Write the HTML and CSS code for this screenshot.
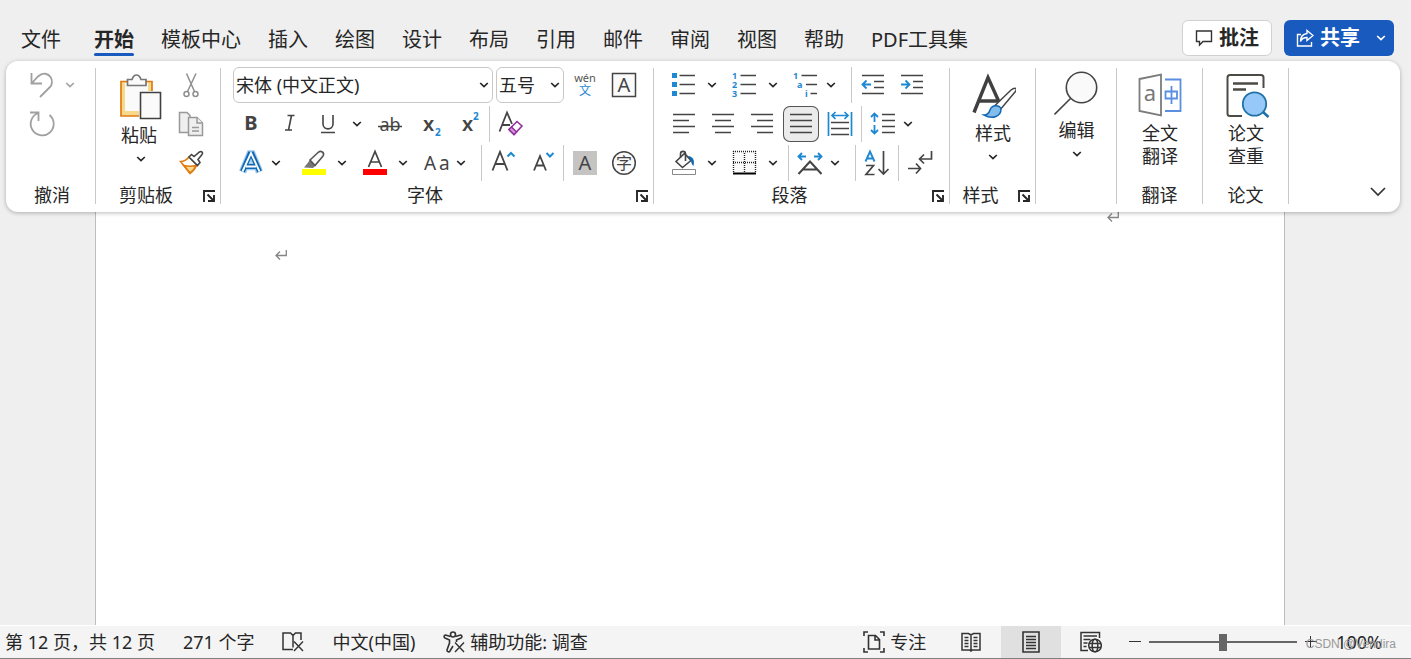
FILE: index.html
```html
<!DOCTYPE html>
<html lang="zh-CN">
<head>
<meta charset="utf-8">
<title>文档</title>
<link rel="stylesheet" href="styles.css">
</head>
<body>
<svg class="defs" aria-hidden="true">
  <symbol id="chev" viewBox="0 0 10 6"><path d="M1.2 1 5 4.6 8.8 1" fill="none" stroke="currentColor" stroke-width="1.7"/></symbol>
  <symbol id="launch" viewBox="0 0 12 12"><path d="M1 12V1h11M4.5 4.500l6 6M11 5v6H5" fill="none" stroke="#262626" stroke-width="1.900"/></symbol>
  <symbol id="ret" viewBox="0 0 12 12"><path d="M11.3 1v5.500H1M5 2.500l-4 4 4 4" fill="none" stroke="#858585" stroke-width="1.300"/></symbol>
</svg>

<header class="top">
  <nav class="tabs">
    <a class="tab file" href="#">文件</a>
    <a class="tab active" href="#">开始</a>
    <a class="tab" href="#">模板中心</a>
    <a class="tab" href="#">插入</a>
    <a class="tab" href="#">绘图</a>
    <a class="tab" href="#">设计</a>
    <a class="tab" href="#">布局</a>
    <a class="tab" href="#">引用</a>
    <a class="tab" href="#">邮件</a>
    <a class="tab" href="#">审阅</a>
    <a class="tab" href="#">视图</a>
    <a class="tab" href="#">帮助</a>
    <a class="tab" href="#">PDF工具集</a>
  </nav>
  <div class="actions">
    <button class="comment"><svg width="18" height="18" viewBox="0 0 18 18"><path d="M1.500 2h15v10.500H8L4.500 16v-3.500h-3z" fill="none" stroke="#333" stroke-width="1.400"/></svg>批注</button>
    <button class="share"><svg width="18" height="18" viewBox="0 0 18 18" fill="none" stroke="#fff" stroke-width="1.400"><path d="M5 5.500H1.500v11.500h14V13M11 1.500l6 5-6 5V8.500c-3.500 0-5.500 1.500-6.500 4 0-5 2.500-7.500 6.500-8z"/></svg>共享<svg class="chev" width="10" height="6"><use href="#chev"/></svg></button>
  </div>
</header>

<main class="ribbon">
  <section class="group undo">
    <div class="rows">
      <div class="row">
        <button class="ic" aria-label="撤消"><svg viewBox="0 0 36 36"><path d="M8.500 6v10.500H19M8.500 16.500 15 9.500C20 5 25 6.500 27.500 10S29 18 27 20L17 30" fill="none" stroke="#a0a0a0" stroke-width="1.800"/></svg></button><button class="arr dim" aria-label="撤消列表"><svg><use href="#chev"/></svg></button>
      </div>
      <div class="row">
        <button class="ic" aria-label="重做"><svg viewBox="0 0 36 36"><path d="M7 6.500h8.500V15M15.500 7A11.500 11.500 0 1 0 26.500 9" fill="none" stroke="#a0a0a0" stroke-width="1.800"/></svg></button>
      </div>
    </div>
    <div class="foot"><span>撤消</span></div>
  </section>

  <section class="group">
    <div class="cols">
      <button class="big paste"><svg width="44" height="48" viewBox="0 0 44 48"><path d="M2 8.500h31V43H2z" fill="#f8d98c" stroke="#e07b12" stroke-width="1.700"/><path d="M6 10h23v28H6z" fill="#fafafa"/><path d="M8.500 12.500V6.500H13c1-3 2.500-4.500 4.500-4.500S21 3.500 22 6.500h5v6z" fill="#fafafa" stroke="#767676" stroke-width="1.700"/><path d="M20 18h22v29H20z" fill="#fff"/><path d="M21.500 19.500h20v26h-20z" fill="#fafafa" stroke="#404040" stroke-width="1.600"/></svg><span>粘贴</span><svg class="chev"><use href="#chev"/></svg></button>
      <div class="rows">
        <button class="ic" aria-label="剪切"><svg viewBox="0 0 36 36" fill="none" stroke="#8f8f8f" stroke-width="1.500"><path d="M13.500 6.500 21.500 24.500M23 6.500 14.500 24.500"/><circle cx="13.500" cy="27" r="2.500"/><circle cx="22.500" cy="27" r="2.500"/></svg></button>
        <button class="ic" aria-label="复制"><svg viewBox="0 0 36 36" fill="#efefef" stroke="#999" stroke-width="1.500"><path d="M14 26.500H6.500v-20H14l3 3v17z"/><path d="M15.500 11.500h8.500l5.500 5.500v12.500h-14z"/><path d="M24 11.500V17h5.500M19 21.500h7M19 25h7"/></svg></button>
        <button class="ic" aria-label="格式刷"><svg viewBox="0 0 36 36" stroke-width="1.600"><path d="M7.500 16.500c3 0 6-1.500 8.500-4.500l8 8c-2 4-4 6.500-7 8.500z" fill="#fff" stroke="#e07b12"/><path d="M11 20.500c4 1 8 1 12 0-1 3-3.500 6-6 7.500z" fill="#f8d98c" stroke="#e07b12"/><path d="M16 12l2.500-2.500 2.500 2L26.500 7c2-1.500 4 1 2.500 2.500l-4 5 2 3-2.500 3z" fill="#fff" stroke="#444"/></svg></button>
      </div>
    </div>
    <div class="foot"><span>剪贴板</span><button class="launch" aria-label="剪贴板设置"><svg><use href="#launch"/></svg></button></div>
  </section>

  <section class="group">
    <div class="rows">
      <div class="row">
        <div class="combo font"><select aria-label="字体"><option>宋体 (中文正文)</option></select><svg class="chev"><use href="#chev"/></svg></div>
        <div class="combo size"><select aria-label="字号"><option>五号</option></select><svg class="chev"><use href="#chev"/></svg></div>
        <button class="ic" aria-label="拼音指南"><svg viewBox="0 0 36 36"><text x="18" y="15" font-size="11" text-anchor="middle" fill="#555">wén</text><text x="18" y="28" font-size="12" text-anchor="middle" fill="#1e88d2">文</text></svg></button>
        <button class="ic" aria-label="字符边框"><svg viewBox="0 0 36 36"><path d="M6.500 6.500h23v23h-23z" fill="#fafafa" stroke="#444" stroke-width="1.500"/><text x="18" y="25" font-size="20" text-anchor="middle">A</text></svg></button>
      </div>
      <div class="row">
        <button class="ic" aria-label="加粗"><svg viewBox="0 0 36 36"><text x="18" y="24" font-size="20" font-weight="700" text-anchor="middle">B</text></svg></button>
        <button class="ic" aria-label="倾斜"><svg viewBox="0 0 36 36"><path d="M15.500 9.500h7M19.500 9.500 16.500 24M13 24h7" fill="none" stroke="#444" stroke-width="1.600"/></svg></button>
        <span class="split"><button class="ic" aria-label="下划线"><svg viewBox="0 0 36 36"><path d="M12 9v9c0 6.500 10 6.500 10 0V9M10 26.500h14" fill="none" stroke="#444" stroke-width="1.600"/></svg></button><button class="arr" aria-label="下划线样式"><svg><use href="#chev"/></svg></button></span>
        <button class="ic" aria-label="删除线"><svg viewBox="0 0 36 36"><text x="18" y="25" font-size="18" text-anchor="middle">ab</text><path d="M6 20.500h24" stroke="#444" stroke-width="1.500"/></svg></button>
        <button class="ic" aria-label="下标"><svg viewBox="0 0 36 36"><text x="12" y="25" font-size="20" font-weight="600">x</text><text x="24" y="30" font-size="10" font-weight="700" fill="#1e88d2">2</text></svg></button>
        <button class="ic" aria-label="上标"><svg viewBox="0 0 36 36"><text x="12" y="25" font-size="20" font-weight="600">x</text><text x="23" y="14" font-size="10" font-weight="700" fill="#1e88d2">2</text></svg></button>
        <i class="sep"></i>
        <button class="ic" aria-label="清除格式"><svg viewBox="0 0 36 36"><path d="M6.500 25.500 14 6.500 19 18M9 19h8" fill="none" stroke="#444" stroke-width="1.800"/><path d="M16 23.500 24 15.500l5 4.500-8 8.500z" fill="#fff" stroke="#93309c" stroke-width="1.600"/><path d="M16 23.500 18.500 21l5 5-2.500 2.500z" fill="#d59adb" stroke="#93309c" stroke-width="1.500"/></svg></button>
      </div>
      <div class="row">
        <span class="split wide"><button class="ic" aria-label="文本效果"><svg viewBox="0 0 36 36"><g fill="none"><path d="M9.500 27 17 9h2l7.500 18M13 21.500h10" stroke="#9ccbf0" stroke-width="7.500"/><path d="M9.500 26.500 17 9h2l7.500 17.500M13 21.500h10" stroke="#1268b3" stroke-width="5"/><path d="M9.500 26.500 18 8 26.500 26.500M13 21.500h10" stroke="#fff" stroke-width="1.800"/></g></svg></button><button class="arr" aria-label="文本效果列表"><svg><use href="#chev"/></svg></button></span>
        <span class="split"><button class="ic" aria-label="突出显示"><svg viewBox="0 0 36 36"><path d="M6 24v6h24v-6z" fill="#ff0"/><path d="M8 22.500 14 15l5 6-2 2z" fill="#777"/><path d="M14 15 22 7.500c3-2.500 7 0 5 3.500L19 20.500z" fill="#fafafa" stroke="#555" stroke-width="1.600"/></svg></button><button class="arr" aria-label="突出显示颜色"><svg><use href="#chev"/></svg></button></span>
        <span class="split"><button class="ic" aria-label="字体颜色"><svg viewBox="0 0 36 36"><path d="M6 24v6h24v-6z" fill="red"/><path d="M11.500 22 18 6.500 24.500 22M13.500 17h9" fill="none" stroke="#444" stroke-width="1.700"/></svg></button><button class="arr" aria-label="字体颜色列表"><svg><use href="#chev"/></svg></button></span>
        <span class="split wide"><button class="ic" aria-label="更改大小写"><svg viewBox="0 0 36 36"><text x="6" y="25" font-size="19">A</text><text x="21" y="25" font-size="19">a</text></svg></button><button class="arr" aria-label="大小写列表"><svg><use href="#chev"/></svg></button></span>
        <i class="sep"></i>
        <button class="ic" aria-label="增大字号"><svg viewBox="0 0 36 36"><path d="M7.500 25.500 15 7l7.500 18.500M10 19h10" fill="none" stroke="#444" stroke-width="1.800"/><path d="M22.500 11.500 26 8l3.500 3.500" fill="none" stroke="#1e88d2" stroke-width="2"/></svg></button>
        <button class="ic" aria-label="减小字号"><svg viewBox="0 0 36 36"><path d="M10 25.500 16 11l6 14.500M12 20.500h8" fill="none" stroke="#444" stroke-width="1.800"/><path d="M22.500 8 26 11.500 29.500 8" fill="none" stroke="#1e88d2" stroke-width="2"/></svg></button>
        <i class="sep"></i>
        <button class="ic" aria-label="字符底纹"><svg viewBox="0 0 36 36"><path d="M6 6h24v24H6z" fill="#c6c4c2"/><text x="18" y="25" font-size="20" text-anchor="middle">A</text></svg></button>
        <button class="ic" aria-label="带圈字符"><svg viewBox="0 0 36 36"><circle cx="18" cy="18" r="11.300" fill="#fafafa" stroke="#444" stroke-width="1.500"/><text x="18" y="24" font-size="16" text-anchor="middle">字</text></svg></button>
      </div>
    </div>
    <div class="foot"><span>字体</span><button class="launch" aria-label="字体设置"><svg><use href="#launch"/></svg></button></div>
  </section>

  <section class="group">
    <div class="rows">
      <div class="row">
        <span class="split"><button class="ic" aria-label="项目符号"><svg viewBox="0 0 36 36"><path d="M6 6h5v5H6zM6 15h5v5H6zM6 24h5v5H6z" fill="#1e88d2"/><path d="M13.500 8.500H29M13.500 17.500H29M13.500 26.500H29" stroke="#444" stroke-width="1.600"/></svg></button><button class="arr" aria-label="项目符号库"><svg><use href="#chev"/></svg></button></span>
        <span class="split"><button class="ic" aria-label="编号"><svg viewBox="0 0 36 36"><g font-size="9" font-weight="700" fill="#1e88d2"><text x="5" y="12">1</text><text x="5" y="21">2</text><text x="5" y="30">3</text></g><path d="M13.500 8.500H29M13.500 17.500H29M13.500 26.500H29" stroke="#444" stroke-width="1.600"/></svg></button><button class="arr" aria-label="编号库"><svg><use href="#chev"/></svg></button></span>
        <span class="split wide"><button class="ic" aria-label="多级列表"><svg viewBox="0 0 36 36"><g font-size="9" font-weight="700" fill="#1e88d2"><text x="5" y="12">1</text><text x="9" y="21">a</text><text x="17" y="30">i</text></g><path d="M13.500 8.500H29M18 17.500h11M22.500 26.500H29" stroke="#444" stroke-width="1.600"/></svg></button><button class="arr" aria-label="列表库"><svg><use href="#chev"/></svg></button></span>
        <i class="sep"></i>
        <button class="ic" aria-label="减少缩进"><svg viewBox="0 0 36 36" fill="none" stroke="#444" stroke-width="1.600"><path d="M7 8.500h22M19 14.500h10M19 20.500h10M7 26.500h22"/><path d="M16 17.500H7.500M11.500 13.500l-4 4 4 4" stroke="#1e88d2" stroke-width="1.800"/></svg></button>
        <button class="ic" aria-label="增加缩进"><svg viewBox="0 0 36 36" fill="none" stroke="#444" stroke-width="1.600"><path d="M7 8.500h22M19 14.500h10M19 20.500h10M7 26.500h22"/><path d="M7 17.500h8.500M11.500 13.500l4 4-4 4" stroke="#1e88d2" stroke-width="1.800"/></svg></button>
      </div>
      <div class="row">
        <button class="ic" aria-label="左对齐"><svg viewBox="0 0 36 36"><path d="M7 8.500h22M7 14.500h16M7 20.500h22M7 26.500h16" stroke="#444" stroke-width="1.600"/></svg></button>
        <button class="ic" aria-label="居中"><svg viewBox="0 0 36 36"><path d="M7 8.500h22M10 14.500h16M7 20.500h22M10 26.500h16" stroke="#444" stroke-width="1.600"/></svg></button>
        <button class="ic" aria-label="右对齐"><svg viewBox="0 0 36 36"><path d="M7 8.500h22M13 14.500h16M7 20.500h22M13 26.500h16" stroke="#444" stroke-width="1.600"/></svg></button>
        <button class="ic on" aria-label="两端对齐"><svg viewBox="0 0 36 36"><path d="M7 8.500h22M7 14.500h22M7 20.500h22M7 26.500h22" stroke="#444" stroke-width="1.600"/></svg></button>
        <button class="ic" aria-label="分散对齐"><svg viewBox="0 0 36 36" fill="none"><path d="M9 16.500h18M9 22.500h18M9 28.500h18" stroke="#444" stroke-width="1.600"/><path d="M6.500 6v24M29.500 6v24M10 9.500h16M13.500 6l-3.500 3.500 3.500 3.500M22.500 6l3.500 3.500-3.500 3.500" stroke="#1e88d2" stroke-width="1.700"/></svg></button>
        <i class="sep"></i>
        <span class="split wide"><button class="ic" aria-label="行距"><svg viewBox="0 0 36 36" fill="none"><path d="M17 8.500h13M17 14.500h13M17 20.500h13M17 26.500h13" stroke="#444" stroke-width="1.600"/><path d="M9.500 8v8M6 11l3.500-3.500L13 11M9.500 19v8M6 24l3.500 3.500L13 24" stroke="#1e88d2" stroke-width="1.800"/></svg></button><button class="arr" aria-label="行距列表"><svg><use href="#chev"/></svg></button></span>
      </div>
      <div class="row">
        <span class="split"><button class="ic" aria-label="底纹"><svg viewBox="0 0 36 36"><path d="M6.500 24.500h23v5h-23z" fill="#fff" stroke="#888"/><path d="M10 16.500 18.500 8.500l6.500 7-8.500 7z" fill="#fafafa" stroke="#444" stroke-width="1.600"/><path d="M14.500 12.500V9c0-3.500 5-3.500 5 0v7" fill="none" stroke="#444" stroke-width="1.600"/><path d="M22 11c5 .5 7 4 5.500 10-1-1-2-2-2.500-5z" fill="#1268b3"/></svg></button><button class="arr" aria-label="底纹颜色"><svg><use href="#chev"/></svg></button></span>
        <span class="split"><button class="ic" aria-label="边框"><svg viewBox="0 0 36 36" fill="none" stroke="#222"><path d="M6.500 6.500h22v20h-22z" fill="#fafafa" stroke="none"/><path d="M6 6.500h23M6.500 6v21M28.500 6v21M17.500 8v19M6 17.500h23" stroke-width="1.400" stroke-dasharray="1 1"/><path d="M6 28.500h23" stroke="#000" stroke-width="2"/></svg></button><button class="arr" aria-label="边框列表"><svg><use href="#chev"/></svg></button></span>
        <i class="sep"></i>
        <span class="split wide"><button class="ic" aria-label="中文版式"><svg viewBox="0 0 36 36" fill="none"><path d="M6.500 29 18 16.500 29.500 29M11 24.500h14" stroke="#444" stroke-width="2"/><path d="M14 11.500H7M10 8l-3.500 3.500L10 15M22 11.500h7M26 8l3.500 3.500L26 15" stroke="#1e88d2" stroke-width="1.900"/></svg></button><button class="arr" aria-label="版式列表"><svg><use href="#chev"/></svg></button></span>
        <i class="sep"></i>
        <button class="ic" aria-label="排序"><svg viewBox="0 0 36 36" fill="none"><path d="M6.500 16.500 11 6.500l4.500 10M8 13.500h6" stroke="#1e88d2" stroke-width="1.900"/><path d="M7 20.500h7.500L7 29.500h8.500M24.500 6v23M19.500 24l5 5 5-5" stroke="#444" stroke-width="1.700"/></svg></button>
        <i class="sep"></i>
        <button class="ic" aria-label="显示编辑标记"><svg viewBox="0 0 36 36" fill="none" stroke="#444" stroke-width="1.700"><path d="M29.500 6v8H18M22 9.500l-4.500 4.500 4.500 4.500M6 23.500h12M14 18.500l4.500 5-4.500 5"/></svg></button>
      </div>
    </div>
    <div class="foot"><span>段落</span><button class="launch" aria-label="段落设置"><svg><use href="#launch"/></svg></button></div>
  </section>

  <section class="group">
    <div class="cols">
      <button class="big"><svg width="46" height="46" viewBox="0 0 46 46"><path d="M4 39.500 18 4.500 29.500 30M9 28h19" fill="none" stroke="#404040" stroke-width="3.400"/><path d="M25 32.500 41 17c4-3 7-2 4 2L30 37z" fill="#fff" stroke="#444" stroke-width="1.500"/><path d="M14 42c4 0 5-2 6-5 2-6 10-5 11-1 0 7-8 11-17 6z" fill="#83bdec" stroke="#1268b3" stroke-width="1.500"/></svg><span>样式</span><svg class="chev"><use href="#chev"/></svg></button>
    </div>
    <div class="foot"><span>样式</span><button class="launch" aria-label="样式设置"><svg><use href="#launch"/></svg></button></div>
  </section>

  <section class="group">
    <div class="cols">
      <button class="big edit"><svg width="46" height="46" viewBox="0 0 46 46"><circle cx="27.500" cy="17.500" r="15.200" fill="#fafafa" stroke="#444" stroke-width="1.600"/><path d="M17 28 .500 44.500" stroke="#444" stroke-width="1.600"/></svg><span>编辑</span><svg class="chev"><use href="#chev"/></svg></button>
    </div>
  </section>

  <section class="group">
    <div class="cols">
      <button class="big"><svg width="44" height="46" viewBox="0 0 44 46"><path d="M1.500 6 23 1.500v41L1.500 38z" fill="#fff" stroke="#7c7c7c" stroke-width="1.800"/><text x="12" y="28" font-size="22" text-anchor="middle" fill="#777">a</text><path d="M27 6.500h15.500V38H27" fill="none" stroke="#5a8ee0" stroke-width="1.800"/><path d="M27.500 18.500h11.500v7H27.500zM33.500 13v18" fill="none" stroke="#5a8ee0" stroke-width="1.800"/></svg><span>全文<br>翻译</span></button>
    </div>
    <div class="foot"><span>翻译</span></div>
  </section>

  <section class="group">
    <div class="cols">
      <button class="big paper"><svg width="44" height="46" viewBox="0 0 44 46"><path d="M16 43H4c-1.500 0-2.500-1-2.500-2.500V4.500C1.500 3 2.500 2 4 2h31c1.500 0 2.500 1 2.500 2.500V15" fill="none" stroke="#4b4a45" stroke-width="2"/><path d="M7 10.500h25M7 16.500h13" stroke="#4b4a45" stroke-width="2.600"/><circle cx="28.500" cy="31" r="11.700" fill="#96c8f8" stroke="#1f72a8" stroke-width="1.800"/><path d="m37 39 5.500 5" stroke="#1f72a8" stroke-width="2.600"/></svg><span>论文<br>查重</span></button>
    </div>
    <div class="foot"><span>论文</span></div>
  </section>

  <div class="tail"><button class="collapse" aria-label="折叠功能区"><svg width="16" height="10" viewBox="0 0 16 10"><path d="m1 1 7 7 7-7" fill="none" stroke="#333" stroke-width="1.700"/></svg></button></div>
</main>

<article class="doc">
  <div class="page">
    <p class="mark right"><svg width="12" height="12"><use href="#ret"/></svg></p>
    <p class="mark"><svg width="12" height="12"><use href="#ret"/></svg></p>
  </div>
</article>

<footer class="status">
  <div class="left">
    <span>第 12 页，共 12 页</span>
    <span>271 个字</span>
    <button aria-label="校对"><svg width="22" height="22" viewBox="0 0 22 22" fill="none" stroke="#333" stroke-width="1.500"><path d="M11 3v13.500M11 18.500H1V2h7.500L11 4.500 13.500 2H19v7M11 4.500V9"/><path d="m12 10.500 9 9.500M21 10.500 12 20" stroke-width="1.400"/></svg></button>
    <span>中文(中国)</span>
    <button><svg width="22" height="22" viewBox="0 0 22 22" fill="none" stroke="#333" stroke-width="1.600"><circle cx="10" cy="3.500" r="2.500"/><path d="M7.500 5.500 2.500 4C1 4 .5 6 2 7l4.500 2v3L4 19c0 2 2 2.500 3 1l3-5M12.500 5.500l5-1.500c1.500 0 2 2 .500 3L13.500 9v2"/><path d="m12 11.500 9 9.500M21 11.500 12 21" stroke-width="1.400"/></svg>辅助功能: 调查</button>
  </div>
  <div class="views">
    <button class="focus"><svg width="22" height="22" viewBox="0 0 22 22" fill="none" stroke="#333" stroke-width="1.600"><path d="M1 5V1h4M17 1h4v4M21 17v4h-4M5 21H1v-4"/><path d="M5.500 4.500h7l4 4v9.500h-11zM12 4.500V9h4.500"/></svg>专注</button>
    <button class="view" aria-label="阅读视图"><svg width="20" height="20" viewBox="0 0 20 20" fill="none" stroke="#333" stroke-width="1.500"><path d="M10 3 7.500 1.500H1V18h7.500L10 19l1.500-1H19V1.500h-6.500zM10 3v16M3.500 5.500h4M3.500 8.500h4M3.500 11.500h4M3.500 14.500h4M12.500 5.500h4M12.500 8.500h4M12.500 11.500h4M12.500 14.500h4"/></svg></button>
    <button class="view current" aria-label="页面视图"><svg width="18" height="22" viewBox="0 0 18 22" fill="none" stroke="#333" stroke-width="1.600"><path d="M1 1h16v20H1zM4 5.500h10M4 8.500h10M4 11.500h10M4 14.500h10M4 17.500h10"/></svg></button>
    <button class="view" aria-label="Web 版式"><svg width="22" height="22" viewBox="0 0 22 22" fill="none" stroke="#333" stroke-width="1.500"><path d="M8 19.500H1V1.500h18.500V7M3.500 5h13.500M3.500 8.500h7M3.500 12h4M3.500 15.500h3"/><circle cx="15" cy="14.500" r="6.300"/><ellipse cx="15" cy="14.500" rx="2.800" ry="6.300"/><path d="M9 12.500h12M9 16.500h12"/></svg></button>
    <button class="step" aria-label="缩小"><svg width="12" height="12" viewBox="0 0 12 12"><path d="M0 5.500h12" stroke="#333"/></svg></button>
    <input class="zoom" type="range" min="0" max="100" value="50" aria-label="缩放">
    <button class="step" aria-label="放大"><svg width="12" height="12" viewBox="0 0 12 12"><path d="M0 5.500h12M5.500 0v12" stroke="#333"/></svg></button>
    <span class="pct">100%</span>
  </div>
  <span class="credit">CSDN @Vendira</span>
</footer>
</body>
</html>
```
FILE: styles.css
```css
* { box-sizing: border-box; }
body {
  margin: 0;
  min-height: 100vh;
  display: flex;
  flex-direction: column;
  background: #efefef;
  color: #262626;
  font: 18px/24px "Noto Sans", "Noto Sans CJK SC", sans-serif;
}
.defs { position: absolute; width: 0; height: 0; }
button {
  border: 0;
  padding: 0;
  background: none;
  color: inherit;
  font: inherit;
  display: flex;
  align-items: center;
  justify-content: center;
}
svg { display: block; flex: none; }
svg text { fill: #444; }
svg text[fill="#555"] { fill: #555; }
svg text[fill="#777"] { fill: #777; }
svg text[fill="#1e88d2"], svg g[fill] text { fill: #1e88d2; }

.top {
  display: flex;
  justify-content: space-between;
  align-items: flex-start;
  padding: 20px 17px 0 21px;
  height: 61px;
}
.tabs { display: flex; gap: 27px; font-size: 20px; line-height: 33px; }
.tab { color: inherit; text-decoration: none; white-space: nowrap; height: 36px; padding-top: 3px; }
.file { margin-right: 6px; }
.active { font-weight: 700; position: relative; }
.active::after {
  content: "";
  position: absolute;
  left: 0;
  right: 0;
  bottom: 0;
  height: 3px;
  border-radius: 2px;
  background: #185abd;
}
.actions { display: flex; gap: 12px; font-size: 20px; font-weight: 700; }
.actions button { height: 36px; border-radius: 6px; gap: 6px; padding: 0 12px; }
.comment { background: #fff; border: 1px solid #d1d1d1; }
.share { background: #185abd; color: #fff; }
.share .chev { margin-left: 10px; }
.actions .share { padding-right: 8px; }

.ribbon {
  position: relative;
  z-index: 1;
  display: flex;
  margin: 0 11px 0 6px;
  height: 151px;
  background: #fff;
  border-radius: 12px;
  box-shadow: 0 1px 4px rgba(0, 0, 0, .28);
}
.group {
  position: relative;
  display: flex;
  flex-direction: column;
  padding: 6px 11px 5px 12px;
  border-right: 1px solid transparent;
}
.group::after {
  content: "";
  position: absolute;
  right: -1px;
  top: 7px;
  bottom: 8px;
  width: 1px;
  background: #c8c8c8;
}
.undo { padding-left: 17px; padding-right: 14px; }
.rows { display: flex; flex-direction: column; gap: 3px; }
.row { display: flex; height: 36px; gap: 3px; }
.undo .row { gap: 0; }
.cols { display: flex; gap: 3px; height: 114px; }
.ic { width: 36px; height: 36px; }
.ic svg { width: 36px; height: 36px; }
.on { background: #ebebeb; border-radius: 7px; box-shadow: inset 0 0 0 1px #555; }
.split { display: flex; width: 58px; }
.split.wide { width: 60px; }
.arr { width: 20px; }
.wide .arr { width: 14px; }
.arr svg, .chev { width: 10px; height: 6px; }
.dim { color: #a3a3a3; }
.undo .arr { width: 22px; }
.sep { width: 1px; background: #c8c8c8; }
.undo .rows { height: 114px; }

.big { flex-direction: column; justify-content: flex-start; min-width: 62px; padding-top: 6px; line-height: 23px; }
.big svg:first-child { margin-bottom: 3px; }
.big .chev { margin-top: 9px; }
.big.edit { min-width: 57px; padding-top: 3px; }
.paste svg, .paper svg { margin-left: 4px; }

.foot { display: flex; margin: 2px -11px 0 -12px; align-items: center; height: 24px; }
.foot span { flex: 1; text-align: center; white-space: nowrap; }
.undo .foot { margin: 2px -14px 0; }
.launch { width: 24px; height: 24px; padding: 2px 0 0 2px; }
.launch svg { width: 12px; height: 12px; }

.combo { display: grid; align-items: center; }
.combo > * { grid-area: 1 / 1; }
.combo .chev { justify-self: end; margin-right: 4px; pointer-events: none; }
.combo select {
  appearance: none;
  width: 100%;
  height: 36px;
  padding: 0 20px 0 2px;
  border: 1px solid #c8c8c8;
  border-radius: 6px;
  background: #fff;
  color: #262626;
  font: inherit;
}
.font { width: 260px; }
.size { width: 68px; }
.tail { flex: 1; display: flex; justify-content: flex-end; align-items: flex-end; padding: 0 14px 15px; }

.doc { flex: 1; display: flex; margin-top: -12px; border-bottom: 1px solid #fff; }
.page {
  flex: 1;
  margin: 0 126px 0 95px;
  padding: 11px 165px 0 179px;
  background: #fff;
  border: 1px solid #bdbdbd;
  border-width: 0 1px;
}
.mark { margin: 0 0 26px; }
.right { display: flex; justify-content: flex-end; }

.status {
  position: relative;
  display: flex;
  justify-content: space-between;
  height: 33px;
  background: #f4f4f4;
  border-bottom: 1px solid #808080;
  white-space: nowrap;
}
.left, .views { display: flex; align-items: center; }
.left { gap: 28px; padding-left: 5px; }
.status button { gap: 5px; height: 32px; }
.views { padding-right: 29px; }
.status .focus { margin-right: 15px; }
.view { width: 60px; }
.current { background: #e0e0e0; }
.step { width: 28px; }
.status .zoom {
  appearance: none;
  width: 148px;
  height: 18px;
  margin: 0;
  background: linear-gradient(#666, #666) center / 100% 2px no-repeat;
}
.zoom::-webkit-slider-thumb { appearance: none; width: 8px; height: 17px; background: #666; }
.pct { margin-left: 11px; }
.credit {
  position: absolute;
  right: 15px;
  top: 8px;
  font: 12px/20px "Liberation Sans", Arial, sans-serif;
  color: #999;
}
```
